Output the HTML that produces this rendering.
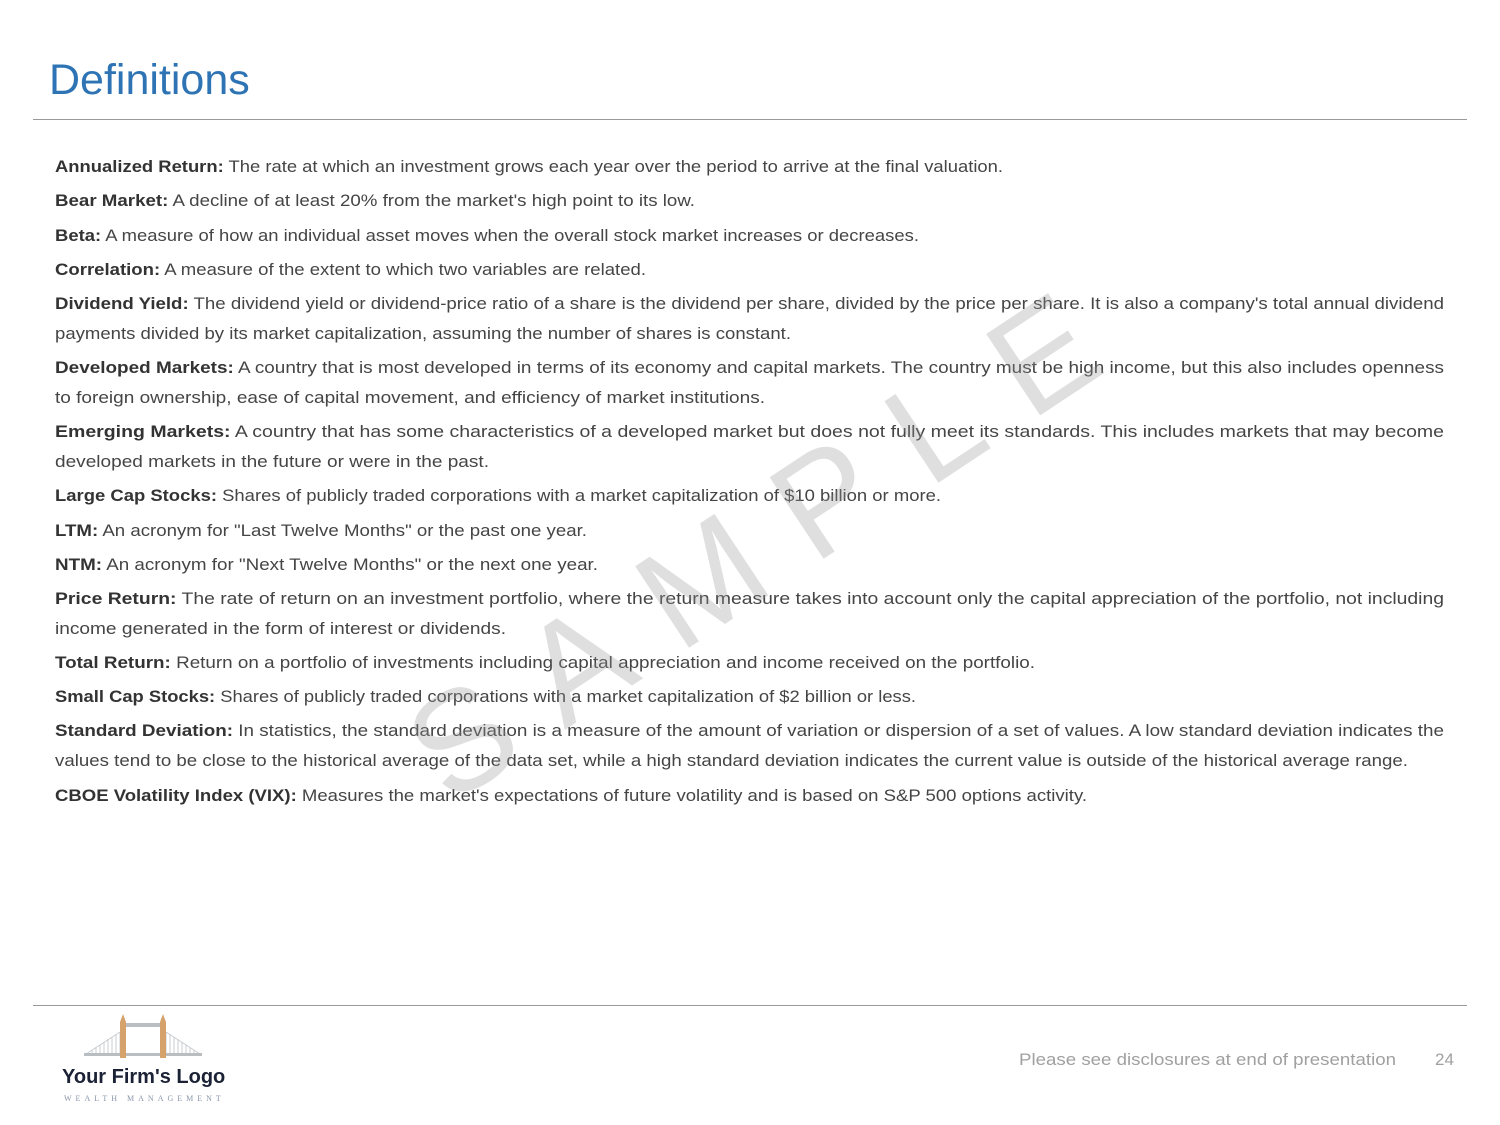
<!DOCTYPE html>
<html><head><meta charset="utf-8"><style>
*{margin:0;padding:0}
body{width:1500px;height:1125px;background:#fff;position:relative;overflow:hidden;font-family:"Liberation Sans",sans-serif}
.t{position:absolute;left:49px;top:56px;font-size:43px;color:#2e74b5;font-weight:normal}
.hr{position:absolute;left:33px;width:1434px;height:1px;background:#999}
.l{position:absolute;left:55px;font-size:17px;color:#454545;white-space:nowrap;line-height:20px;transform-origin:0 0}
.l b{color:#333;font-weight:bold}
.wm{position:absolute;left:771px;top:536px;transform:translate(-50%,-50%) rotate(-33.5deg);font-size:142px;letter-spacing:43px;color:rgba(150,150,150,0.3);white-space:nowrap;font-family:"Liberation Sans",sans-serif}
.ft{position:absolute;top:1050px;font-size:17px;color:#a0a0a0;white-space:nowrap}
</style></head><body>
<div class="t">Definitions</div>
<div class="hr" style="top:119px"></div>
<div class="l" data-w="948" style="top:157px"><b>Annualized Return:</b> The rate at which an investment grows each year over the period to arrive at the final valuation.</div>
<div class="l" data-w="640" style="top:191px"><b>Bear Market:</b> A decline of at least 20% from the market's high point to its low.</div>
<div class="l" data-w="864" style="top:226px"><b>Beta:</b> A measure of how an individual asset moves when the overall stock market increases or decreases.</div>
<div class="l" data-w="591" style="top:260px"><b>Correlation:</b> A measure of the extent to which two variables are related.</div>
<div class="l" data-w="1389" style="top:294px"><b>Dividend Yield:</b> The dividend yield or dividend-price ratio of a share is the dividend per share, divided by the price per share. It is also a company's total annual dividend</div>
<div class="l" data-w="736" style="top:324px">payments divided by its market capitalization, assuming the number of shares is constant.</div>
<div class="l" data-w="1389" style="top:358px"><b>Developed Markets:</b> A country that is most developed in terms of its economy and capital markets. The country must be high income, but this also includes openness</div>
<div class="l" data-w="710" style="top:388px">to foreign ownership, ease of capital movement, and efficiency of market institutions.</div>
<div class="l" data-w="1389" style="top:422px"><b>Emerging Markets:</b> A country that has some characteristics of a developed market but does not fully meet its standards. This includes markets that may become</div>
<div class="l" data-w="434" style="top:452px">developed markets in the future or were in the past.</div>
<div class="l" data-w="886" style="top:486px"><b>Large Cap Stocks:</b> Shares of publicly traded corporations with a market capitalization of $10 billion or more.</div>
<div class="l" data-w="532" style="top:521px"><b>LTM:</b> An acronym for "Last Twelve Months" or the past one year.</div>
<div class="l" data-w="543" style="top:555px"><b>NTM:</b> An acronym for "Next Twelve Months" or the next one year.</div>
<div class="l" data-w="1389" style="top:589px"><b>Price Return:</b> The rate of return on an investment portfolio, where the return measure takes into account only the capital appreciation of the portfolio, not including</div>
<div class="l" data-w="451" style="top:619px">income generated in the form of interest or dividends.</div>
<div class="l" data-w="980" style="top:653px"><b>Total Return:</b> Return on a portfolio of investments including capital appreciation and income received on the portfolio.</div>
<div class="l" data-w="861" style="top:687px"><b>Small Cap Stocks:</b> Shares of publicly traded corporations with a market capitalization of $2 billion or less.</div>
<div class="l" data-w="1389" style="top:721px"><b>Standard Deviation:</b> In statistics, the standard deviation is a measure of the amount of variation or dispersion of a set of values. A low standard deviation indicates the</div>
<div class="l" data-w="1353" style="top:751px">values tend to be close to the historical average of the data set, while a high standard deviation indicates the current value is outside of the historical average range.</div>
<div class="l" data-w="1032" style="top:786px"><b>CBOE Volatility Index (VIX):</b> Measures the market's expectations of future volatility and is based on S&amp;P 500 options activity.</div>
<div class="wm">SAMPLE</div>
<div class="hr" style="top:1005px"></div>
<svg style="position:absolute;left:84px;top:1012px" width="118" height="50" viewBox="0 0 118 50">
<g stroke="#c8ccd0" stroke-width="1"><path d="M2 42 L36 20 M36 20 V42 M82 20 L116 42 M82 20 V42"/>
<path d="M8 42V38M12 42V35M16 42V33M20 42V30M24 42V27M28 42V25M32 42V22M86 42V22M90 42V25M94 42V27M98 42V30M102 42V33M106 42V35M110 42V38"/></g>
<rect x="0" y="41" width="118" height="3" fill="#b9bec3"/>
<rect x="42" y="11" width="34" height="4" fill="#b9bec3"/>
<path d="M36 46V10l3-8 3 8v36z" fill="#d4a26a"/>
<path d="M76 46V10l3-8 3 8v36z" fill="#d4a26a"/>
</svg>
<div style="position:absolute;left:62px;top:1066px;font-size:20px;font-weight:bold;color:#1c2235">Your Firm's Logo</div>
<div style="position:absolute;left:64px;top:1094px;font-size:8px;letter-spacing:4px;color:#8a96aa;font-family:'Liberation Serif',serif">WEALTH MANAGEMENT</div>
<div class="ft" id="disc" style="left:1019px;transform-origin:0 0">Please see disclosures at end of presentation</div>
<div class="ft" style="left:1435px">24</div>
<script>
document.querySelectorAll('.l').forEach(function(e){
  var w=e.getBoundingClientRect().width;var t=+e.getAttribute('data-w');
  e.style.transform='scaleX('+(t/w)+')';
});
var d=document.getElementById('disc');d.style.transform='scaleX('+(377/d.getBoundingClientRect().width)+')';
</script>
</body></html>
